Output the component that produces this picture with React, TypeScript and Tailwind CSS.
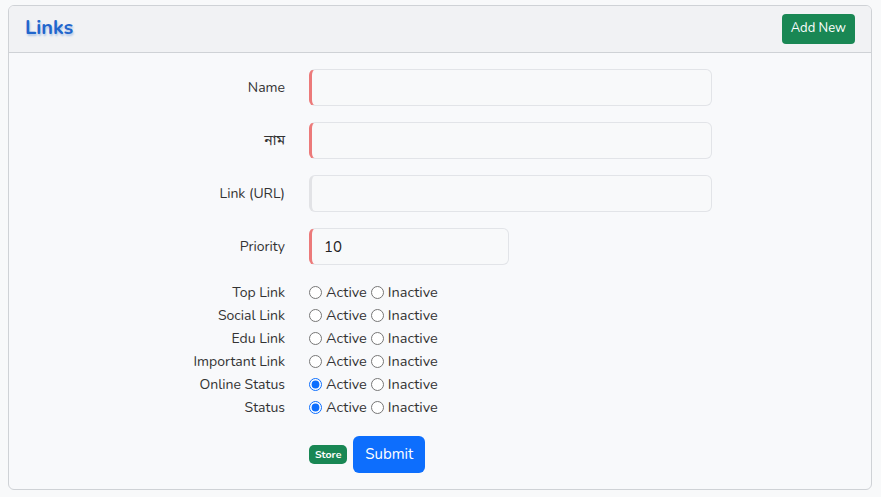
import React from "react";

const FONT = "font-['Nunito','Noto_Sans','Noto_Sans_Bengali',sans-serif]";

const TEXT_FIELDS = [
  { label: "Name", required: true, wide: true, value: "" },
  { label: "নাম", required: true, wide: true, value: "" },
  { label: "Link (URL)", required: false, wide: true, value: "" },
  { label: "Priority", required: true, wide: false, value: "10" },
];

const TOGGLES = [
  { label: "Top Link", active: false },
  { label: "Social Link", active: false },
  { label: "Edu Link", active: false },
  { label: "Important Link", active: false },
  { label: "Online Status", active: true },
  { label: "Status", active: true },
];

function TextRow({
  label,
  required,
  wide,
  value,
}: {
  label: string;
  required: boolean;
  wide: boolean;
  value: string;
}) {
  return (
    <div className="flex items-center">
      <label className="w-[276px] text-right text-[14px] text-[#333]">{label}</label>
      <input
        defaultValue={value}
        className={
          "ml-6 h-[37px] rounded-md border border-[#e2e4e8] bg-[#f8f9fa] px-3 text-[15px] text-[#222] outline-none " +
          (wide ? "w-[403px] " : "w-[200px] ") +
          (required ? "border-l-[3px] border-l-[#ec7a7a]" : "border-l-[3px] border-l-[#e2e3e6]")
        }
      />
    </div>
  );
}

function ToggleRow({ label, active }: { label: string; active: boolean }) {
  return (
    <div className="flex h-[23px] items-center">
      <span className="w-[276px] text-right text-[14px] text-[#333]">{label}</span>
      <div className="ml-6 flex items-center text-[14.5px] text-[#333]">
        <input
          type="radio"
          checked={active}
          readOnly
          className="m-0 h-[13px] w-[13px] accent-[#0d6efd]"
        />
        <span className="ml-[4px]">Active</span>
        <input type="radio" checked={false} readOnly className="m-0 ml-[4px] h-[13px] w-[13px]" />
        <span className="ml-[4px]">Inactive</span>
      </div>
    </div>
  );
}

export default function App() {
  return (
    <div className={"min-h-[497px] bg-[#f8f9fa] px-2 pt-[5px] " + FONT}>
      <div className="w-[864px] overflow-hidden rounded-md border border-[#cfd2d6] bg-[#f8f9fb]">
        <div className="flex h-[47px] items-center justify-between border-b border-[#cfd2d6] bg-[#f1f2f4] px-4">
          <h1 className="-mt-[3px] text-[20px] font-bold text-[#2266cc] [text-shadow:1px_2px_2px_rgba(34,102,204,0.3)]">
            Links
          </h1>
          <button className="h-[30px] rounded-[4px] bg-[#198754] px-[9px] text-[13px] text-white">
            Add New
          </button>
        </div>
        <div className="flex h-[436px] flex-col pt-[16px]">
          <div className="flex flex-col gap-4">
            {TEXT_FIELDS.map((f) => (
              <TextRow key={f.label} {...f} />
            ))}
          </div>
          <div className="mt-[16px] flex flex-col">
            {TOGGLES.map((t) => (
              <ToggleRow key={t.label} {...t} />
            ))}
          </div>
          <div className="ml-[300px] mt-[17px] flex items-center">
            <span className="rounded-[5px] bg-[#198754] px-[6px] py-[2px] text-[10.5px] font-bold text-white">
              Store
            </span>
            <button className="ml-[6px] h-[37px] rounded-md bg-[#0d6efd] px-[12px] text-[15px] text-white">
              Submit
            </button>
          </div>
        </div>
      </div>
    </div>
  );
}
